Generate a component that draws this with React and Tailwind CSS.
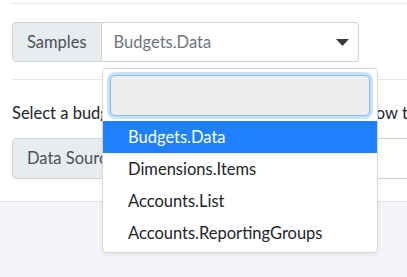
import { useState } from "react";

const options = ["Budgets.Data", "Dimensions.Items", "Accounts.List", "Accounts.ReportingGroups"];

function Caret() {
  return (
    <svg width="13" height="7" viewBox="0 0 13 7" className="shrink-0">
      <path d="M0 0h13L6.5 7z" fill="#343a40" />
    </svg>
  );
}

export default function App() {
  const [active] = useState(0);

  return (
    <div className="relative h-[277px] w-[407px] overflow-hidden bg-[#f3f4f7] font-['Lato',sans-serif] text-[16.5px]">
      <div className="border-b border-[#dee2e6] bg-white pb-[22px] pl-3">
        <div className="h-[4px] border-b border-[#e3e5e8]" />
        <div className="mt-[18px] flex h-[40px] w-[347px]">
          <div className="flex items-center rounded-l-[4px] border border-[#ced4da] bg-[#e9ecef] px-[14px] text-[#495057]">
            Samples
          </div>
          <div className="flex flex-1 items-center justify-between rounded-r-[4px] border border-l-0 border-[#ced4da] pl-[12px] pr-[9px] text-[#6c757d]">
            <span>Budgets.Data</span>
            <Caret />
          </div>
        </div>
        <div className="mt-[17px] h-px bg-[#e3e5e8]" />
        <p className="mt-[21px] whitespace-nowrap text-[#212529]">
          Select a budget table from the sample datasets below to
        </p>
        <div className="mt-[12px] flex h-[41px]">
          <div className="flex items-center rounded-l-[4px] border border-[#ced4da] bg-[#e9ecef] px-[14px] text-[#495057]">
            Data Source
          </div>
          <div className="flex-1 border-y border-[#ced4da]" />
        </div>
      </div>

      <div className="absolute left-[102px] top-[68px] w-[276px] rounded-[4px] border border-[#d6d9dc] bg-white pb-[3px] shadow-[0_2px_4px_rgba(0,0,0,0.06)]">
        <div className="px-[7px] pt-[6px] pb-[5px]">
          <div className="h-[41px] rounded-[5px] border border-[#80bdff] bg-[#eeeeee] shadow-[0_0_0_3px_rgba(0,123,255,0.22)]" />
        </div>
        {options.map((o, i) => (
          <div
            key={o}
            className={
              i === active
                ? "flex h-[32px] items-center bg-[#1f80ff] pl-[25px] text-white"
                : "flex h-[32px] items-center pl-[25px] text-[#212529]"
            }
          >
            {o}
          </div>
        ))}
      </div>
    </div>
  );
}
